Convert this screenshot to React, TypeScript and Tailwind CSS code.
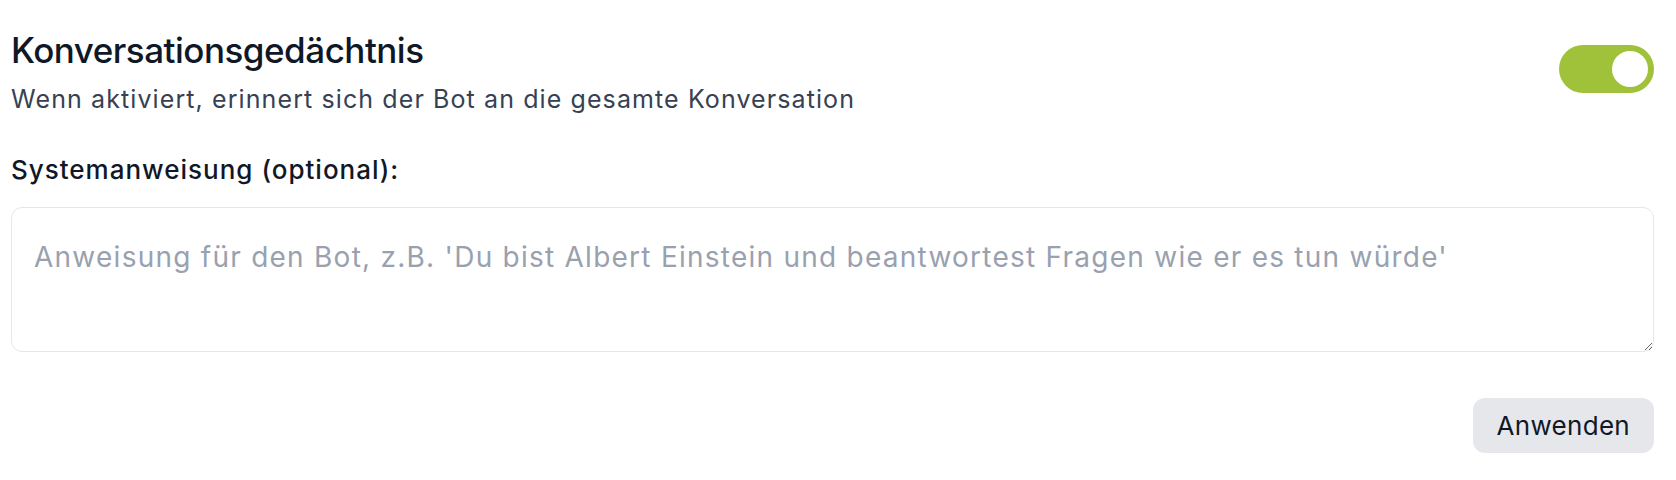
import { useState } from "react";

function Toggle({ on, onChange }: { on: boolean; onChange: (v: boolean) => void }) {
    return (
        <button
            type="button"
            role="switch"
            aria-checked={on}
            onClick={() => onChange(!on)}
            className={`relative w-[95px] h-[48px] rounded-full shrink-0 transition-colors ${on ? "bg-[#a0c13a]" : "bg-gray-300"}`}
        >
            <span
                className={`absolute top-[6px] w-[36px] h-[36px] rounded-full bg-white transition-all ${on ? "left-[53px]" : "left-[6px]"}`}
            />
        </button>
    );
}

export default function App() {
    const [memory, setMemory] = useState(true);
    const [prompt, setPrompt] = useState("");

    return (
        <div className="w-full min-h-[480px] bg-white pl-[11px] pr-[22px] pt-[26px] font-['Inter',sans-serif]">
            {/* Memory setting */}
            <div className="flex items-start justify-between">
                <div>
                    <h2 className="text-[35px] leading-[48px] font-medium text-gray-900 tracking-[-0.5px]">
                        Konversationsgedächtnis
                    </h2>
                    <p className="mt-[8px] text-[25px] leading-[34px] text-gray-700 tracking-[1.1px]">
                        Wenn aktiviert, erinnert sich der Bot an die gesamte Konversation
                    </p>
                </div>
                <div className="pt-[19px]">
                    <Toggle on={memory} onChange={setMemory} />
                </div>
            </div>

            {/* System prompt */}
            <label className="block mt-[37px] text-[26px] leading-[34px] font-medium text-gray-900 tracking-[1px]">
                Systemanweisung (optional):
            </label>
            <textarea
                value={prompt}
                onChange={(e) => setPrompt(e.target.value)}
                placeholder="Anweisung für den Bot, z.B. 'Du bist Albert Einstein und beantwortest Fragen wie er es tun würde'"
                className="block w-full h-[145px] mt-[20px] px-[22px] pt-[30px] pb-[10px] text-[28px] leading-[38px] tracking-[1.25px] text-gray-900 placeholder:text-gray-400 border-[1.5px] border-gray-200 rounded-[11px] outline-none"
            />

            <div className="flex justify-end mt-[46px]">
                <button className="h-[55px] px-[24px] rounded-[12px] bg-gray-200 text-[26px] tracking-[0.3px] text-gray-900">
                    Anwenden
                </button>
            </div>
        </div>
    );
}
